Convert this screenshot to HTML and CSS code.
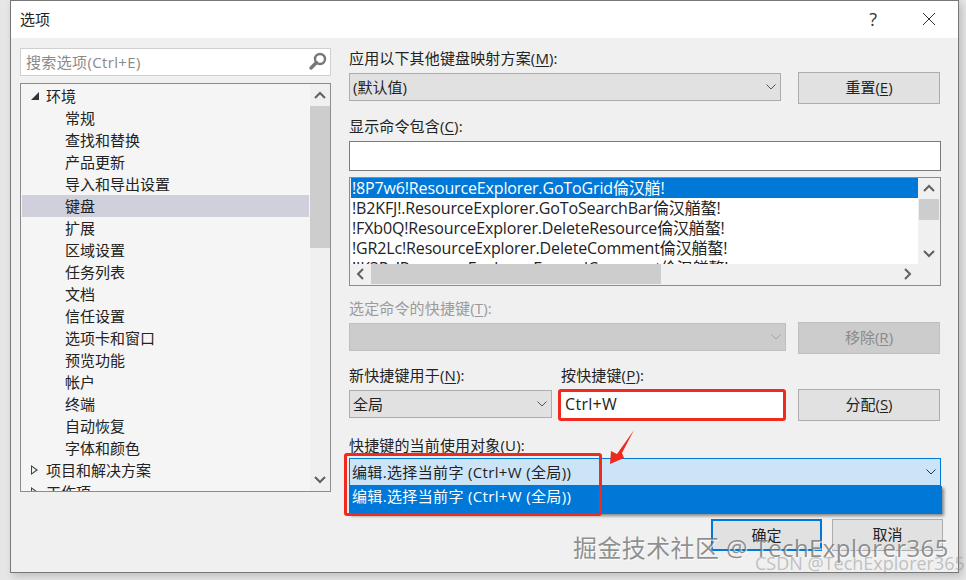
FILE: index.html
```html
<html>
<head>
  <meta charset="utf-8">
  <link rel="stylesheet" href="styles.css">
</head>
<body>
  <div class="dialog">
    <div class="titlebar">
      <span class="title">选项</span>
      <span class="help">?</span>
      <svg class="close" width="14" height="14" viewBox="0 0 14 14"><path d="M1 1L13 13M13 1L1 13" stroke="#333" stroke-width="1" fill="none"/></svg>
    </div>
    <div class="content">
      <div class="left">
        <div class="search">
          <span>搜索选项(Ctrl+E)</span>
          <svg width="20" height="20" viewBox="0 0 20 20"><circle cx="12" cy="8" r="5" fill="none" stroke="#777" stroke-width="2.4"/><path d="M8.5 11.5L3 17" stroke="#777" stroke-width="3.4" stroke-linecap="round"/></svg>
        </div>
        <div class="tree">
          <div class="tree-list">
            <div class="node"><i class="tri open"></i>环境</div>
            <div class="leaf">常规</div>
            <div class="leaf">查找和替换</div>
            <div class="leaf">产品更新</div>
            <div class="leaf">导入和导出设置</div>
            <div class="leaf selected">键盘</div>
            <div class="leaf">扩展</div>
            <div class="leaf">区域设置</div>
            <div class="leaf">任务列表</div>
            <div class="leaf">文档</div>
            <div class="leaf">信任设置</div>
            <div class="leaf">选项卡和窗口</div>
            <div class="leaf">预览功能</div>
            <div class="leaf">帐户</div>
            <div class="leaf">终端</div>
            <div class="leaf">自动恢复</div>
            <div class="leaf">字体和颜色</div>
            <div class="node"><i class="tri closed"></i>项目和解决方案</div>
            <div class="node"><i class="tri closed"></i>工作项</div>
          </div>
          <div class="vscroll tree-scroll">
            <svg class="arrow" width="20" height="22" viewBox="0 0 20 22"><path d="M5 14L10 9L15 14" fill="none" stroke="#606060" stroke-width="2"/></svg>
            <div class="thumb"></div>
            <div class="spacer"></div>
            <svg class="arrow" width="20" height="22" viewBox="0 0 20 22"><path d="M5 8L10 13L15 8" fill="none" stroke="#606060" stroke-width="2"/></svg>
          </div>
        </div>
      </div>

      <div class="right">
        <div class="label">应用以下其他键盘映射方案(<u>M</u>):</div>
        <div class="row row-first">
          <div class="select scheme">(默认值)<svg class="chev" width="10" height="6" viewBox="0 0 10 6"><path d="M0.5 0.5L5 5L9.5 0.5" fill="none" stroke="#555"/></svg></div>
          <div class="btn">重置(<u>E</u>)</div>
        </div>
        <div class="label second">显示命令包含(<u>C</u>):</div>
        <div class="textbox"></div>
        <div class="cmdbox">
          <div class="cmdmain">
            <div class="cmds">
              <div class="cmd active">!8P7w6!ResourceExplorer.GoToGrid倫汉艏!</div>
              <div class="cmd">!B2KFJ!.ResourceExplorer.GoToSearchBar倫汉艏螯!</div>
              <div class="cmd">!FXb0Q!ResourceExplorer.DeleteResource倫汉艏螯!</div>
              <div class="cmd">!GR2Lc!ResourceExplorer.DeleteComment倫汉艏螯!</div>
              <div class="cmd">!JK3Pz!ResourceExplorer.ExpandComment倫汉艏螯!</div>
            </div>
            <div class="hscroll">
              <svg class="arrow" width="20" height="20" viewBox="0 0 20 20"><path d="M12 5L7 10L12 15" fill="none" stroke="#606060" stroke-width="2"/></svg>
              <div class="hthumb"></div>
              <svg class="arrow end" width="20" height="20" viewBox="0 0 20 20"><path d="M8 5L13 10L8 15" fill="none" stroke="#606060" stroke-width="2"/></svg>
            </div>
          </div>
          <div class="vscroll cmd-scroll">
            <svg class="arrow" width="20" height="21" viewBox="0 0 20 21"><path d="M5 13L10 8L15 13" fill="none" stroke="#606060" stroke-width="2"/></svg>
            <div class="cmd-thumb"></div>
            <div class="spacer"></div>
            <svg class="arrow" width="20" height="21" viewBox="0 0 20 21"><path d="M5 8L10 13L15 8" fill="none" stroke="#606060" stroke-width="2"/></svg>
          </div>
        </div>
        <div class="label third disabled">选定命令的快捷键(<u>T</u>):</div>
        <div class="row row-first">
          <div class="select off"><svg class="chev" width="10" height="6" viewBox="0 0 10 6"><path d="M0.5 0.5L5 5L9.5 0.5" fill="none" stroke="#a0a0a0"/></svg></div>
          <div class="btn btn-off">移除(<u>R</u>)</div>
        </div>
        <div class="split-labels">
          <div class="label">新快捷键用于(<u>N</u>):</div>
          <div class="label">按快捷键(<u>P</u>):</div>
        </div>
        <div class="row row-first">
          <div class="select scope">全局<svg class="chev" width="10" height="6" viewBox="0 0 10 6"><path d="M0.5 0.5L5 5L9.5 0.5" fill="none" stroke="#555"/></svg></div>
          <div class="keyinput">Ctrl+W</div>
          <div class="btn">分配(<u>S</u>)</div>
        </div>
        <div class="label fourth">快捷键的当前使用对象(U):</div>
        <div class="combo">编辑.选择当前字 (Ctrl+W (全局))<svg class="chev" width="10" height="6" viewBox="0 0 10 6"><path d="M0.5 0.5L5 5L9.5 0.5" fill="none" stroke="#333"/></svg></div>
        <div class="combo-item">编辑.选择当前字 (Ctrl+W (全局))</div>
      </div>
    </div>
    <div class="footer">
      <div class="btn ok">确定</div>
      <div class="btn cancel">取消</div>
    </div>
  </div>

  <!-- annotations drawn on top of the screenshot -->
  <div class="redbox"></div>
  <svg class="redarrow" width="30" height="40" viewBox="0 0 30 40"><path d="M26 2L14 25L16 30L2 36L3 23L9 26Z" fill="#ee2a1f"/></svg>
  <div class="mark-juejin">掘金技术社区 @ TechExplorer365</div>
  <div class="mark-csdn">CSDN @TechExplorer365</div>
</body>
</html>
```

FILE: styles.css
```css
body {
  margin: 0;
  width: 966px;
  height: 580px;
  overflow: hidden;
  position: relative;
  background-color: #e6e6e6;
  font-family: "Open Sans", "Noto Sans CJK SC", sans-serif;
  font-size: 15px;
  color: #222;
}
u {
  text-underline-offset: 2px;
}
.dialog {
  margin-left: 10px;
  width: 947px;
  height: 571px;
  border: 1px solid #777;
  background-color: #f0f0f0;
  box-shadow: 3px 3px 8px rgba(0, 0, 0, 0.18);
  display: flex;
  flex-direction: column;
}
.titlebar {
  height: 37px;
  box-sizing: border-box;
  background-color: white;
  display: flex;
  align-items: center;
  padding: 0 0 2px 9px;
  flex-shrink: 0;
}
.title {
  flex: 1;
}
.help {
  font-size: 18px;
  margin-right: 45px;
  color: #333;
}
.close {
  margin-right: 22px;
}
.content {
  height: 480px;
  display: flex;
  padding: 10px 0 0 9px;
  box-sizing: border-box;
  flex-shrink: 0;
}
.left {
  width: 311px;
}
.search {
  height: 28px;
  box-sizing: border-box;
  border: 1px solid #d0d0d0;
  background-color: white;
  display: flex;
  align-items: center;
  justify-content: space-between;
  padding: 0 2px 2px 5px;
  color: #8a8a8a;
  letter-spacing: 0.35px;
}
.tree {
  margin-top: 7px;
  height: 409px;
  box-sizing: border-box;
  border: 1px solid #8c8c8c;
  background-color: #f5f5f5;
  display: flex;
  overflow: hidden;
}
.tree-list {
  width: 287px;
  padding: 1px 0 0 1px;
  height: 406px;
  overflow: hidden;
}
.node, .leaf {
  height: 22px;
  line-height: 22px;
  white-space: nowrap;
}
.node {
  padding-left: 24px;
  position: relative;
}
.leaf {
  padding-left: 43px;
}
.selected {
  background-color: #d0d0dc;
}
.tri {
  position: absolute;
  left: 9px;
  top: 6px;
}
.tri.open {
  width: 0;
  height: 0;
  left: 9px;
  top: 7px;
  border-left: 8px solid transparent;
  border-bottom: 8px solid #333;
}
.tri.closed {
  width: 0;
  height: 0;
  border-left: 7px solid #444;
  border-top: 5px solid transparent;
  border-bottom: 5px solid transparent;
}
.tri.closed::after {
  content: "";
  position: absolute;
  left: -6px;
  top: -3px;
  border-left: 4px solid #f5f5f5;
  border-top: 3px solid transparent;
  border-bottom: 3px solid transparent;
}
.vscroll {
  display: flex;
  flex-direction: column;
  background-color: #f0f0f0;
}
.tree-scroll {
  width: 20px;
  margin-left: 1px;
}
.arrow {
  display: block;
  flex-shrink: 0;
}
.thumb {
  height: 142px;
  background-color: #cdcdcd;
}
.spacer {
  flex: 1;
}
.right {
  margin-left: 18px;
  width: 592px;
}
.label {
  height: 20px;
  line-height: 20px;
  white-space: nowrap;
  letter-spacing: 0.15px;
}
.row {
  display: flex;
  justify-content: space-between;
  align-items: flex-start;
  padding-right: 1px;
}
.row-first {
  margin-top: 4px;
}
.select {
  box-sizing: border-box;
  height: 28px;
  line-height: 26px;
  margin-top: 1px;
  border: 1px solid #adadad;
  background-color: #e1e1e1;
  padding-left: 3px;
  position: relative;
}
.chev {
  position: absolute;
  right: 4px;
  top: 10px;
}
.scheme {
  width: 432px;
}
.btn {
  box-sizing: border-box;
  width: 142px;
  height: 32px;
  line-height: 29px;
  border: 1px solid #adadad;
  background-color: #e1e1e1;
  text-align: center;
}
.second {
  margin-top: 12px;
}
.textbox {
  margin-top: 5px;
  height: 30px;
  box-sizing: border-box;
  border: 1px solid #7a7a7a;
  background-color: white;
}
.cmdbox {
  margin-top: 6px;
  height: 109px;
  box-sizing: border-box;
  border: 1px solid #8c8c8c;
  background-color: #f0f0f0;
  padding: 0 1px 1px;
  display: flex;
}
.cmdmain {
  width: 567px;
  height: 106px;
  overflow: hidden;
}
.cmds {
  height: 86px;
  overflow: hidden;
  background-color: white;
}
.cmd {
  height: 20px;
  line-height: 20px;
  padding-left: 1px;
  white-space: nowrap;
  font-size: 16px;
  letter-spacing: -0.15px;
}
.active {
  background-color: #0078d7;
  color: white;
}
.hscroll {
  height: 20px;
  display: flex;
  background-color: #f0f0f0;
}
.hthumb {
  width: 290px;
  background-color: #cdcdcd;
}
.arrow.end {
  margin-left: auto;
  margin-right: 1px;
}
.cmd-scroll {
  width: 20px;
  height: 86px;
  margin-left: 1px;
}
.cmd-thumb {
  height: 21px;
  background-color: #cdcdcd;
}
.third {
  margin-top: 12px;
}
.disabled {
  color: #9a9a9a;
}
.off {
  width: 437px;
  background-color: #cccccc;
  border-color: #bfbfbf;
}
.btn-off {
  background-color: #cccccc;
  border-color: #bfbfbf;
  color: #8a8a8a;
}
.split-labels {
  margin-top: 11px;
  display: flex;
}
.split-labels .label:first-child {
  width: 212px;
}
.scope {
  width: 203px;
}
.keyinput {
  box-sizing: border-box;
  margin-left: 6px;
  width: 228px;
  height: 32px;
  border: 3px solid #f02a1e;
  border-radius: 3px;
  background-color: white;
  line-height: 25px;
  padding-left: 4px;
  margin-right: auto;
  font-size: 16px;
  letter-spacing: 0.3px;
}
.fourth {
  margin-top: 14px;
}
.combo {
  margin-top: 3px;
  height: 28px;
  line-height: 26px;
  box-sizing: border-box;
  border: 1px solid #0078d7;
  background-color: #cce4f7;
  padding-left: 2px;
  position: relative;
  white-space: nowrap;
  letter-spacing: 0.35px;
}
.combo-item {
  height: 28px;
  line-height: 20px;
  padding-left: 3px;
  margin-right: -1px;
  background-color: #0078d7;
  color: white;
  box-shadow: 2px 2px 3px rgba(0, 0, 0, 0.45);
  white-space: nowrap;
  letter-spacing: 0.35px;
}
.footer {
  display: flex;
  justify-content: flex-end;
  gap: 10px;
  padding-right: 15px;
  margin-top: 1px;
}
.ok, .cancel {
  width: 111px;
}
.ok {
  border: 2px solid #0078d7;
  line-height: 28px;
}
.redbox {
  position: absolute;
  left: 344px;
  top: 453px;
  width: 258px;
  height: 63px;
  box-sizing: border-box;
  border: 3px solid #f02a1e;
  border-radius: 3px;
}
.redarrow {
  position: absolute;
  left: 608px;
  top: 428px;
}
.mark-juejin {
  position: absolute;
  left: 573px;
  top: 531px;
  font-size: 24px;
  line-height: 34px;
  letter-spacing: 0.4px;
  color: rgba(110, 110, 110, 0.75);
  text-shadow: 1px 1px 1px rgba(255, 255, 255, 0.8);
  white-space: nowrap;
}
.mark-csdn {
  position: absolute;
  left: 755px;
  top: 551px;
  font-size: 18px;
  line-height: 24px;
  color: rgba(150, 150, 150, 0.55);
  white-space: nowrap;
}
```
